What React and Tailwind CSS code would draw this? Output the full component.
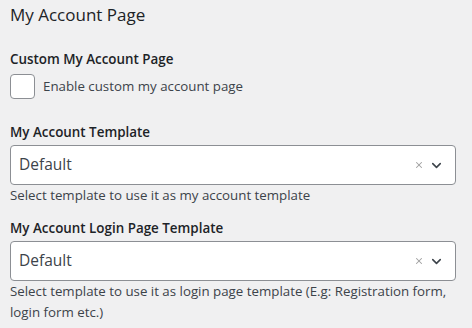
import { ChevronDown, X } from "lucide-react";

function TemplateSelect({ label, help, className }) {
  return (
    <div className={"flex flex-col " + className}>
      <label className="text-[13.4px] font-semibold text-[#1d2327] leading-[20px]">{label}</label>
      <div className="mt-[3px] h-[40px] w-[446px] flex items-center justify-between bg-white border border-[#8c8f94] rounded-[4px] pl-[8px] pr-[11px]">
        <span className="text-[15.5px] text-[#3c434a]">Default</span>
        <div className="flex items-center gap-[5px]">
          <X size={10} strokeWidth={2.5} className="text-[#a0a0a0]" />
          <ChevronDown size={15} strokeWidth={2.5} className="text-[#3c434a]" />
        </div>
      </div>
      <p className="text-[13.3px] leading-[21px] text-[#3c434a] max-w-[460px]">{help}</p>
    </div>
  );
}

export default function App() {
  return (
    <div className="w-[472px] h-[328px] bg-[#f0f0f1] px-[10px] pt-[3px] overflow-hidden" style={{ fontFamily: '"Open Sans", "Noto Sans", sans-serif' }}>
      <h2 className="text-[17px] leading-[24px] text-[#1d2327] font-medium">My Account Page</h2>

      <div className="mt-[22px] flex flex-col">
        <label className="text-[13.4px] font-semibold text-[#1d2327] leading-[20px]">Custom My Account Page</label>
        <label className="mt-[5px] flex items-center gap-[8px]">
          <span className="w-[25px] h-[25px] bg-white border border-[#8c8f94] rounded-[4px]" />
          <span className="text-[13.3px] text-[#3c434a]">Enable custom my account page</span>
        </label>
      </div>

      <TemplateSelect
        className="mt-[23px]"
        label="My Account Template"
        help="Select template to use it as my account template"
      />
      <TemplateSelect
        className="mt-[12px]"
        label="My Account Login Page Template"
        help="Select template to use it as login page template (E.g: Registration form, login form etc.)"
      />
    </div>
  );
}
